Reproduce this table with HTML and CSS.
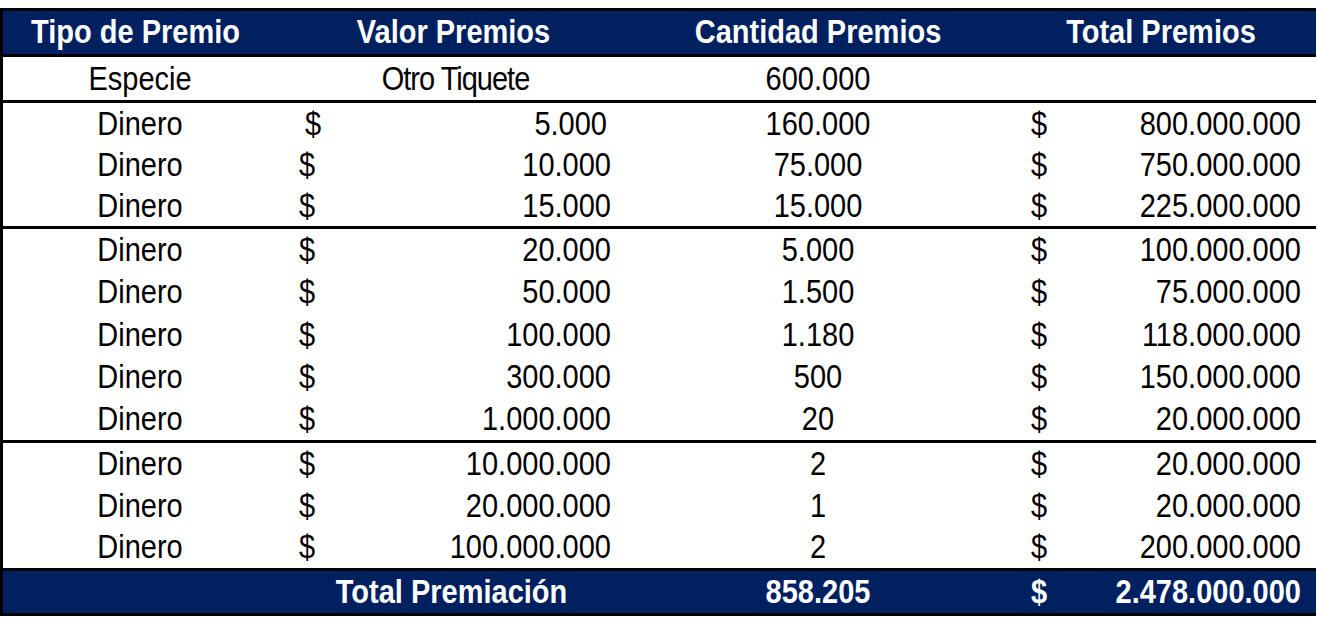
FILE: index.html
```html
<!DOCTYPE html>
<html lang="es">
<head>
<meta charset="utf-8">
<title>Premios</title>
<link rel="stylesheet" href="styles.css">
</head>
<body>
<div class="sheet">
  <div class="row head">
    <div class="c c1 hd1">Tipo de Premio</div>
    <div class="c c2 hd">Valor Premios</div>
    <div class="c c3 hd">Cantidad Premios</div>
    <div class="c c4 hd">Total Premios</div>
  </div>
  <div class="group g0">
    <div class="row">
      <div class="c c1">Especie</div>
      <div class="c c2 center tight">Otro Tiquete</div>
      <div class="c c3">600.000</div>
      <div class="c c4"></div>
    </div>
  </div>
  <div class="group g1">
    <div class="row">
      <div class="c c1">Dinero</div>
      <div class="c c2 money shift"><span>$</span><span>5.000</span></div>
      <div class="c c3">160.000</div>
      <div class="c c4 money"><span>$</span><span>800.000.000</span></div>
    </div>
    <div class="row">
      <div class="c c1">Dinero</div>
      <div class="c c2 money"><span>$</span><span>10.000</span></div>
      <div class="c c3">75.000</div>
      <div class="c c4 money"><span>$</span><span>750.000.000</span></div>
    </div>
    <div class="row">
      <div class="c c1">Dinero</div>
      <div class="c c2 money"><span>$</span><span>15.000</span></div>
      <div class="c c3">15.000</div>
      <div class="c c4 money"><span>$</span><span>225.000.000</span></div>
    </div>
  </div>
  <div class="group g2">
    <div class="row">
      <div class="c c1">Dinero</div>
      <div class="c c2 money"><span>$</span><span>20.000</span></div>
      <div class="c c3">5.000</div>
      <div class="c c4 money"><span>$</span><span>100.000.000</span></div>
    </div>
    <div class="row">
      <div class="c c1">Dinero</div>
      <div class="c c2 money"><span>$</span><span>50.000</span></div>
      <div class="c c3">1.500</div>
      <div class="c c4 money"><span>$</span><span>75.000.000</span></div>
    </div>
    <div class="row">
      <div class="c c1">Dinero</div>
      <div class="c c2 money"><span>$</span><span>100.000</span></div>
      <div class="c c3">1.180</div>
      <div class="c c4 money"><span>$</span><span>118.000.000</span></div>
    </div>
    <div class="row">
      <div class="c c1">Dinero</div>
      <div class="c c2 money"><span>$</span><span>300.000</span></div>
      <div class="c c3">500</div>
      <div class="c c4 money"><span>$</span><span>150.000.000</span></div>
    </div>
    <div class="row">
      <div class="c c1">Dinero</div>
      <div class="c c2 money"><span>$</span><span>1.000.000</span></div>
      <div class="c c3">20</div>
      <div class="c c4 money"><span>$</span><span>20.000.000</span></div>
    </div>
  </div>
  <div class="group g3">
    <div class="row">
      <div class="c c1">Dinero</div>
      <div class="c c2 money"><span>$</span><span>10.000.000</span></div>
      <div class="c c3">2</div>
      <div class="c c4 money"><span>$</span><span>20.000.000</span></div>
    </div>
    <div class="row">
      <div class="c c1">Dinero</div>
      <div class="c c2 money"><span>$</span><span>20.000.000</span></div>
      <div class="c c3">1</div>
      <div class="c c4 money"><span>$</span><span>20.000.000</span></div>
    </div>
    <div class="row">
      <div class="c c1">Dinero</div>
      <div class="c c2 money"><span>$</span><span>100.000.000</span></div>
      <div class="c c3">2</div>
      <div class="c c4 money"><span>$</span><span>200.000.000</span></div>
    </div>
  </div>
  <div class="row total">
    <div class="c c1"></div>
    <div class="c c2 total-label">Total Premiación</div>
    <div class="c c3">858.205</div>
    <div class="c c4 money"><span>$</span><span>2.478.000.000</span></div>
  </div>
</div>
</body>
</html>
```

FILE: styles.css
```css
html, body {
  background: #ffffff;
}
body {
  margin: 8px 0 0 0;
  font-family: "Liberation Sans", Arial, sans-serif;
  font-size: 29px;
  color: #000000;
}
.sheet {
  width: 1313px;
  border-left: 3px solid #000;
  border-top: 3px solid #000;
  border-bottom: 3px solid #000;
  display: flex;
  flex-direction: column;
}
.row {
  display: grid;
  grid-template-columns: 274px 353px 376px 310px;
  align-items: center;
  flex: 1;
  padding-top: 1px;
}
.group {
  display: flex;
  flex-direction: column;
  border-top: 3px solid #000;
}
.g0 { height: 43px; }
.g1 { height: 123px; }
.g2 { height: 211px; }
.g3 { height: 125px; }
.head {
  height: 43px;
  flex: none;
  padding-top: 0;
  background: #002060;
  color: #ffffff;
  font-weight: bold;
}
.total {
  height: 42px;
  flex: none;
  padding-top: 0;
  background: #002060;
  color: #ffffff;
  font-weight: bold;
  border-top: 3px solid #000;
}
.c {
  text-align: center;
  white-space: nowrap;
  line-height: 1;
  transform: scaleY(1.12);
}
.hd1 {
  padding-right: 9px;
}
.c2.center {
  padding-left: 4px;
}
.total-label {
  padding-right: 4px;
}
.tight {
  letter-spacing: -1px;
}
.money {
  display: flex;
  justify-content: space-between;
}
.c2.money {
  padding: 0 19px 0 22px;
}
.c2.money.shift {
  padding: 0 23px 0 28px;
}
.c4.money {
  padding: 0 15px 0 25px;
}
```
